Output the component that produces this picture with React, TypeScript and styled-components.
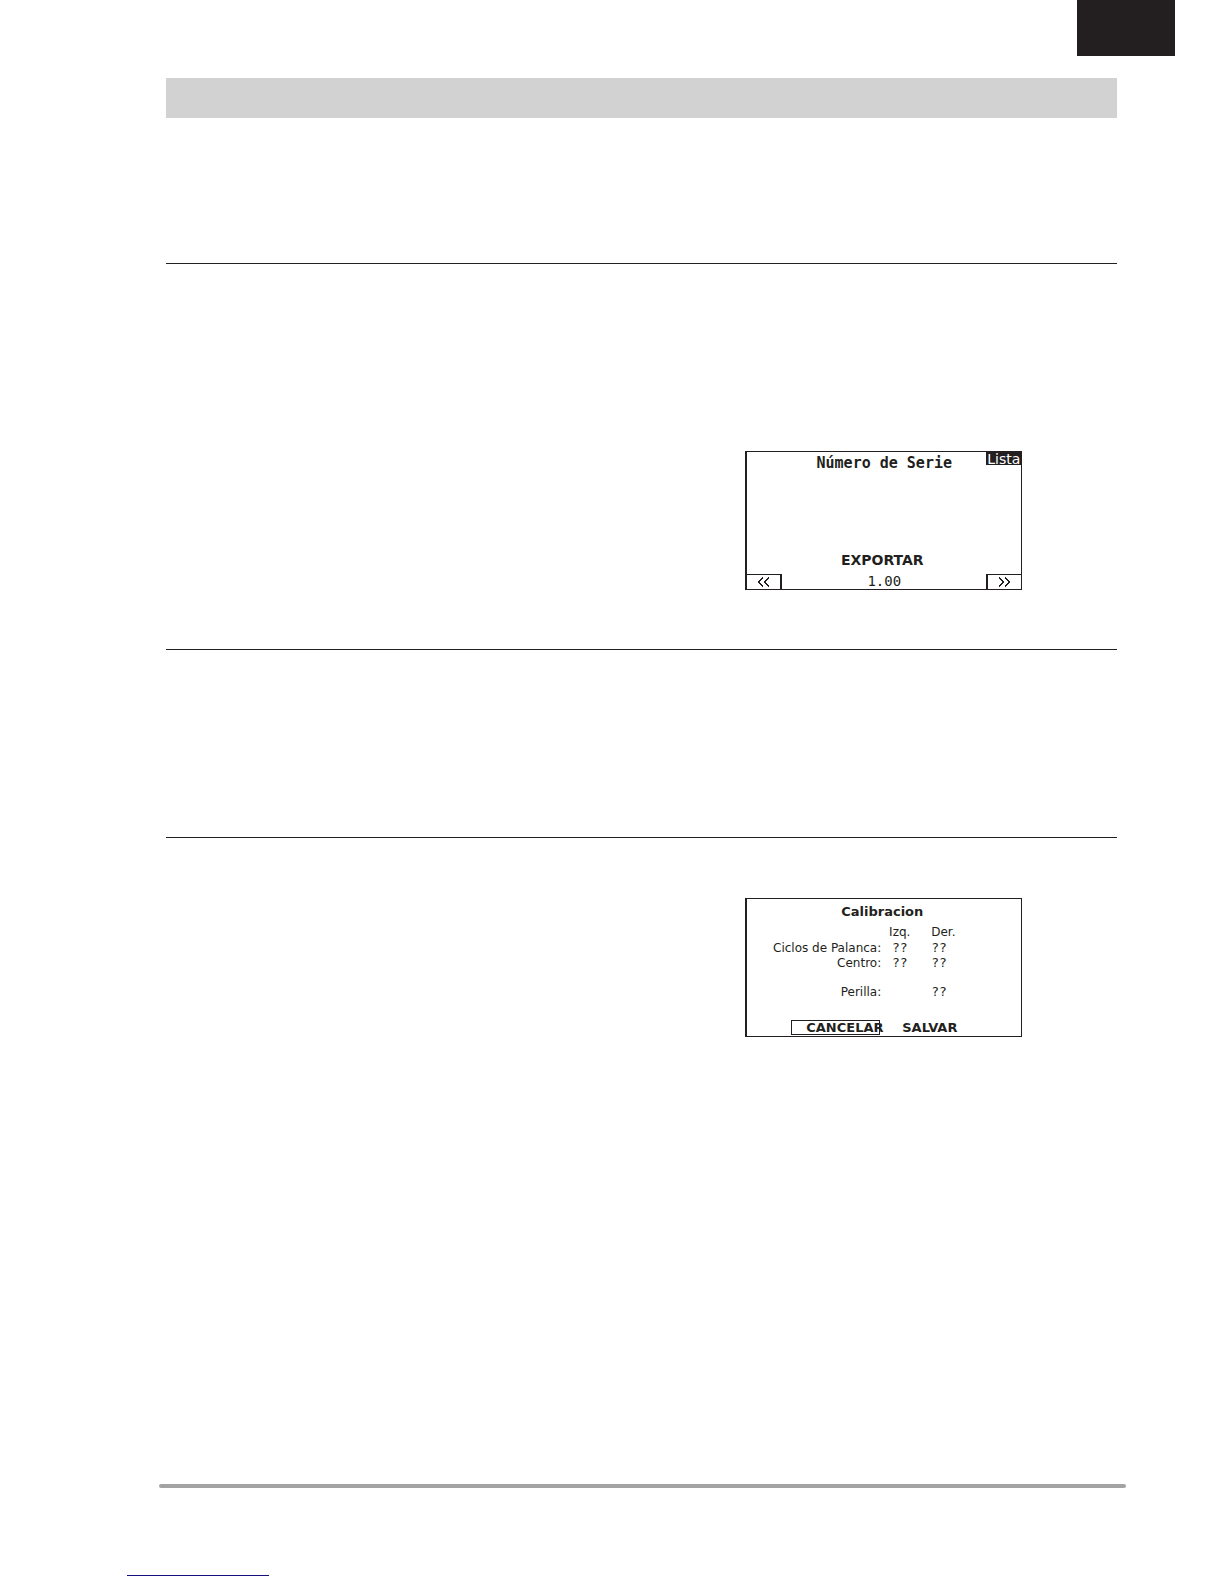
import React from "react";
import styled, { createGlobalStyle } from "styled-components";

const ink = "#231f20";
const sans = '"DejaVu Sans", sans-serif';
const mono = '"DejaVu Sans Mono", monospace';

const GlobalStyle = createGlobalStyle`
  *, *::before, *::after { box-sizing: border-box; }
  body { margin: 0; background: #fff; color: ${ink}; font-family: ${sans}; }
`;

const Header = styled.header`
  display: flex;
  justify-content: flex-end;
  padding-right: 49px;
`;

const PageTab = styled.div`
  width: 98px;
  height: 56px;
  background: ${ink};
`;

const Main = styled.main`
  margin: 22px 107px 0 166px;
`;

const TitleBar = styled.div`
  height: 40px;
  background: #d2d2d2;
`;

const Section = styled.section<{ $height: number; $top?: number }>`
  display: grid;
  grid-template-columns: 1fr 1fr;
  column-gap: 18px;
  align-items: start;
  min-height: ${(p) => p.$height}px;
  padding-top: ${(p) => p.$top ?? 0}px;
`;

const Rule = styled.hr`
  height: 1px;
  margin: 0;
  border: 0;
  background: ${ink};
`;

const Screen = styled.article`
  grid-column: 2;
  justify-self: center;
  display: flex;
  flex-direction: column;
  width: 277px;
  height: 139px;
  border: 1px solid ${ink};
  border-left-width: 2px;
`;

const ScreenTop = styled.div`
  display: grid;
  grid-template-columns: 1fr auto 1fr;
  align-items: start;
`;

const SerialTitle = styled.h2`
  grid-column: 2;
  margin: 2px 0 0;
  font: bold 15px/18px ${mono};
`;

const ListButton = styled.button`
  justify-self: end;
  height: 13px;
  padding: 0 1px;
  border: 0;
  background: ${ink};
  color: #fff;
  font: 14px/12px ${sans};
`;

const ExportButton = styled.button`
  margin: auto auto 6px;
  padding: 0 4px 0 0;
  border: 0;
  background: none;
  color: ${ink};
  font: bold 14px/16px ${sans};
`;

const ScreenFooter = styled.div`
  display: flex;
  justify-content: space-between;
  height: 15px;
`;

const Version = styled.span`
  font: 14px/14px ${mono};
`;

const NavButton = styled.button<{ $side: "left" | "right" }>`
  display: flex;
  align-items: center;
  justify-content: center;
  width: 35px;
  padding: 0;
  border: 0 solid ${ink};
  border-top-width: 1px;
  border-left-width: ${(p) => (p.$side === "right" ? 2 : 0)}px;
  border-right-width: ${(p) => (p.$side === "left" ? 2 : 0)}px;
  background: none;
  color: ${ink};
`;

const CalibrationTitle = styled.h2`
  margin: 4px 0 3px;
  padding-right: 4px;
  text-align: center;
  font: bold 13px/17px ${sans};
`;

const Readings = styled.table`
  width: 225px;
  border-collapse: collapse;
  table-layout: fixed;
  font: 12px/15px ${sans};

  th, td { padding: 0; font-weight: normal; white-space: nowrap; }
  thead th { height: 18px; }
`;

const RowLabel = styled.th`
  width: 134px;
  text-align: right;
`;

const LeftCell = styled.td`
  width: 37px;
  text-align: center;
`;

const RightCell = styled.td`
  && {
    padding-left: 13px;
  }
  text-align: left;
`;

const Value = styled.span`
  font: 13px/14px ${mono};
`;

const SpacedRow = styled.tr`
  th, td { padding-top: 14px; }
`;

const Actions = styled.div`
  display: flex;
  gap: 22px;
  margin: auto 0 1px 44px;
`;

const ActionButton = styled.button<{ $selected?: boolean }>`
  width: ${(p) => (p.$selected ? "89px" : "auto")};
  height: 15px;
  padding: 0 0 0 ${(p) => (p.$selected ? 14 : 0)}px;
  border: ${(p) => (p.$selected ? `1px solid ${ink}` : "0")};
  background: none;
  color: ${ink};
  font: bold 13px/13px ${sans};
  text-align: left;
  white-space: nowrap;
`;

const Footer = styled.footer`
  margin: 0 98px 0 159px;
`;

const FooterBar = styled.div`
  height: 4px;
  border-radius: 2px;
  background: #a3a3a3;
`;

const FooterLink = styled.a`
  display: block;
  width: 142px;
  height: 20px;
  margin: 68px 0 8px 127px;
  border-bottom: 1px solid #15127c;
`;

function Chevrons({ side }: { side: "left" | "right" }) {
  const d =
    side === "left"
      ? "M6 0.5L1.5 5L6 9.5M12 0.5L7.5 5L12 9.5"
      : "M1 0.5L5.5 5L1 9.5M7 0.5L11.5 5L7 9.5";
  return (
    <svg width="13" height="10" viewBox="0 0 13 10" aria-hidden="true">
      <path
        d={d}
        fill="none"
        stroke="currentColor"
        strokeWidth="1.2"
        shapeRendering="crispEdges"
      />
    </svg>
  );
}

export default function App() {
  return (
    <>
      <GlobalStyle />
      <Header>
        <PageTab />
      </Header>
      <Main>
        <TitleBar />
        <Section $height={145} />
        <Rule />
        <Section $height={385} $top={187}>
          <Screen>
            <ScreenTop>
              <SerialTitle>Número de Serie</SerialTitle>
              <ListButton type="button">Lista</ListButton>
            </ScreenTop>
            <ExportButton type="button">EXPORTAR</ExportButton>
            <ScreenFooter>
              <NavButton type="button" $side="left">
                <Chevrons side="left" />
              </NavButton>
              <Version>1.00</Version>
              <NavButton type="button" $side="right">
                <Chevrons side="right" />
              </NavButton>
            </ScreenFooter>
          </Screen>
        </Section>
        <Rule />
        <Section $height={187} />
        <Rule />
        <Section $height={646} $top={60}>
          <Screen>
            <CalibrationTitle>Calibracion</CalibrationTitle>
            <Readings>
              <thead>
                <tr>
                  <RowLabel as="td" />
                  <LeftCell as="th" scope="col">Izq.</LeftCell>
                  <RightCell as="th" scope="col">Der.</RightCell>
                </tr>
              </thead>
              <tbody>
                <tr>
                  <RowLabel scope="row">Ciclos de Palanca:</RowLabel>
                  <LeftCell><Value>??</Value></LeftCell>
                  <RightCell><Value>??</Value></RightCell>
                </tr>
                <tr>
                  <RowLabel scope="row">Centro:</RowLabel>
                  <LeftCell><Value>??</Value></LeftCell>
                  <RightCell><Value>??</Value></RightCell>
                </tr>
                <SpacedRow>
                  <RowLabel scope="row">Perilla:</RowLabel>
                  <LeftCell />
                  <RightCell><Value>??</Value></RightCell>
                </SpacedRow>
              </tbody>
            </Readings>
            <Actions>
              <ActionButton type="button" $selected>CANCELAR</ActionButton>
              <ActionButton type="button">SALVAR</ActionButton>
            </Actions>
          </Screen>
        </Section>
      </Main>
      <Footer>
        <FooterBar />
      </Footer>
      <FooterLink href="#" />
    </>
  );
}
